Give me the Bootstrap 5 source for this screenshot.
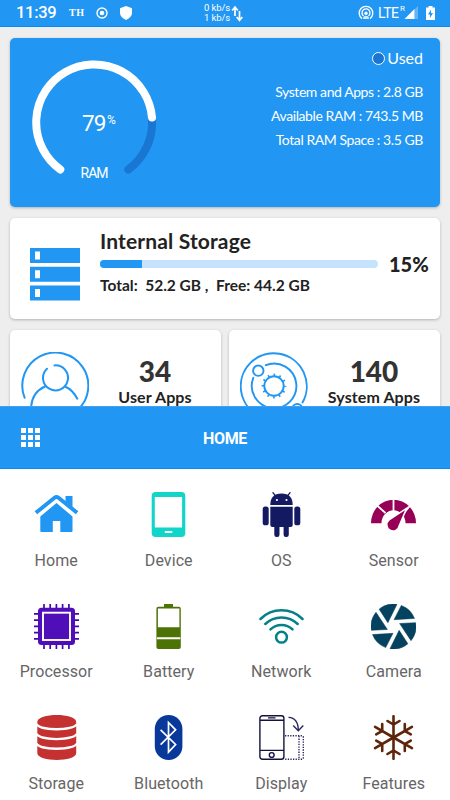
<!DOCTYPE html>
<html lang="en">
<head>
<meta charset="utf-8">
<meta name="viewport" content="width=device-width, initial-scale=1">
<title>Device Info</title>
<link href="https://cdn.jsdelivr.net/npm/bootstrap@5.3.0/dist/css/bootstrap.min.css" rel="stylesheet">
<style>
body{width:450px;height:800px;background:#eee;font-family:Roboto,"Liberation Sans",sans-serif}
svg{display:block;flex:none}
.lato{font-family:Lato,"Liberation Sans",sans-serif}
.blue{background:#2196f3}
.status{height:27px;padding:0 15px 0 16px;line-height:1;border-bottom:1px solid #0c8af0}
.clock{font-size:16.5px;letter-spacing:-.3px;width:53px;font-weight:500}
.th{font:700 10px/1 "Liberation Serif",serif;width:27px;letter-spacing:.6px}
.speed{font-size:9.5px;line-height:10.5px;width:27px;margin-left:64px;letter-spacing:-.1px}
.lte{font-size:14px;letter-spacing:-.5px;width:22px}
.roam{font-size:8px;width:4px;height:16px}
.overview{height:379px;padding:11px 10px 0}
.panel{border:0;border-radius:5px;box-shadow:0 1px 3px rgba(0,0,0,.25);color:#222}
.ram{height:169px;margin-bottom:11px;background:#2196f3;color:#fff}
.gauge{width:124px;margin:22px 0 0 22px}
.gauge text{fill:#fff}
.stats{padding:10px 17px 0 0;font-size:14px}
.stats .used{font-size:16px;line-height:20px;margin-bottom:12px}
.stats .line{line-height:24.2px;letter-spacing:-.42px}
.dot{width:13px;height:13px;border:1px solid #fff;background:#1976d2;margin-right:2px}
.store{height:101px;margin-bottom:11px;padding-left:20px}
.store .info{width:278px;margin:11px 0 0 20px}
.store h2{font-size:21px;line-height:24px;margin:0 0 7px;font-weight:700;letter-spacing:.15px}
.store .progress{height:8px;border-radius:4px;background:#c5e3fc}
.store .progress-bar{background:#2196f3}
.store .total{font-size:15.5px;line-height:18px;margin-top:8px;white-space:pre}
.pct{font-size:20px;margin:-9px 0 0 11px;font-weight:900}
.apps{height:120px;padding:22px 0 0 11px}
.apps .txt{padding-top:4px}
.num{font-size:28px;line-height:31px;font-weight:900;color:#333}
.cap{font-size:16px;line-height:20px;letter-spacing:.1px}
.sheet-head{height:63px;border-top:1px solid #42a0f2;border-bottom:1px solid #0c8af0}
.sheet-head .ttl{font-size:16px;font-weight:700;letter-spacing:-.3px;padding-top:2px}
.tiles{height:331px;padding-top:23px}
.tile{height:111.7px;color:#666;font-size:16px}
.tile .name{line-height:20px;margin-top:13.5px;letter-spacing:.08px}
</style>
<script src="https://cdn.jsdelivr.net/npm/bootstrap@5.3.0/dist/js/bootstrap.bundle.min.js"></script>
</head>
<body class="d-flex flex-column overflow-hidden">
<header class="status blue text-white d-flex align-items-center flex-shrink-0">
  <span class="clock">11:39</span><span class="th">TH</span>
  <svg width="12" height="12" viewBox="0 0 12 12"><circle cx="6" cy="6" r="5" fill="none" stroke="#fff" stroke-width="1.4"/><circle cx="6" cy="6" r="2.3" fill="#fff"/></svg>
  <svg class="ms-2" width="24" height="14" viewBox="0 0 24 14"><path d="M10 0l6 2.2v4.800q0 4-6 7q-6-3-6-7V2.200z" fill="#fff"/></svg>
  <span class="speed">0 kb/s<br>1 kb/s</span>
  <svg width="13" height="17" viewBox="0 0 13 17"><path d="M4 11V3M1.200 5.500L4 2l2.800 3.500M8.500 6v8M5.700 12l2.800 3.500l2.800-3.500" fill="none" stroke="#fff" stroke-width="1.700"/></svg>
  <svg class="ms-auto me-1" width="16" height="16" viewBox="0 0 16 16"><g fill="none" stroke="#fff" stroke-width="1.3"><path d="M4 13.600A6.800 6.800 0 1 1 12 13.600M5.500 11A4 4 0 1 1 10.500 11"/></g><circle cx="8" cy="8.300" r="1.700" fill="#fff"/><path d="M5 14q0-3.200 3-3.200t3 3.200z" fill="#fff" opacity=".8"/></svg>
  <span class="lte">LTE</span><span class="roam">R</span>
  <svg width="22" height="14" viewBox="0 0 22 14"><path d="M14 0v13H10.500V3.500z" fill="#fff" opacity=".3"/><path d="M10.500 3V13H.5z" fill="#fff"/></svg>
  <svg width="9" height="14" viewBox="0 0 9 14"><path d="M2.500 0h4v1.500H9V14H0V1.500h2.500z" fill="#fff"/><path d="M5 3.500L2 8.500h2v3.500l3-5H5z" fill="#2196f3"/></svg>
</header>

<main class="overview overflow-hidden flex-shrink-0">
  <section class="panel card ram d-flex flex-row">
    <svg class="gauge" height="126" viewBox="32 60 124 126">
      <g fill="none" stroke-width="8" stroke-linecap="round">
        <path d="M152 119A58 58 0 0 1 128.300 169.500" stroke="#1976d2"/>
        <path d="M60.300 169.500A58 58 0 1 1 152 117.500" stroke="#fff"/>
      </g>
      <text x="82" y="130.500" font-size="22.500" textLength="24.500">79</text><text x="107" y="124" font-size="12">%</text>
      <text x="94.500" y="177.500" font-size="14" text-anchor="middle" textLength="28">RAM</text>
    </svg>
    <div class="stats lato ms-auto text-end">
      <div class="used d-flex align-items-center justify-content-end"><span class="dot rounded-circle"></span>Used</div>
      <div class="line">System and Apps : 2.8 GB</div>
      <div class="line">Available RAM : 743.5 MB</div>
      <div class="line">Total RAM Space : 3.5 GB</div>
    </div>
  </section>

  <section class="panel card store lato d-flex flex-row">
    <svg class="mt-4" width="50" height="60" viewBox="0 0 50 60"><g transform="translate(0 6)"><path d="M0 0h50v15H0zM0 18.800h50v15H0zM0 37.600h50v15H0z" fill="#2196f3"/><path d="M5 3.500h5v8H5zM5 22.300h5v8H5zM5 41.100h5v8H5z" fill="#fff"/></g></svg>
    <div class="info">
      <h2>Internal Storage</h2>
      <div class="progress"><div class="progress-bar" style="width:15%"></div></div>
      <div class="total fw-bold">Total:  52.2 GB ,  Free: 44.2 GB</div>
    </div>
    <div class="pct align-self-center">15%</div>
  </section>

  <div class="d-flex gap-2 lato">
    <section class="panel card apps d-flex flex-row w-50">
      <svg width="68" height="68" viewBox="21 352 68 68"><g fill="none" stroke="#2196f3" stroke-width="2" stroke-linecap="round"><path d="M24.600 397.700A33 33 0 1 1 77 410.500"/><path d="M47 368.700A12.500 12.500 0 1 0 54.500 365.400M31 410C31 397 37 390 45 386.500M65 386.500Q73 390 77.300 398.700"/></g></svg>
      <div class="txt flex-fill text-center"><div class="num">34</div><div class="cap fw-bold">User Apps</div></div>
    </section>
    <section class="panel card apps d-flex flex-row w-50">
      <svg width="68" height="68" viewBox="240 352 68 68"><g fill="none" stroke="#2196f3" stroke-width="1.900" stroke-linecap="round"><path d="M302.500 402.500A33 33 0 1 0 290 415"/><path d="M265.800 365.200A22.300 22.300 0 1 1 253.300 377.800"/><circle cx="258.300" cy="370.700" r="5.200"/><circle cx="297.300" cy="409" r="5"/><circle cx="274" cy="386" r="9.700"/></g><circle cx="274" cy="386" r="11.200" fill="none" stroke="#2196f3" stroke-width="2.400" stroke-dasharray="1.600 4.264" stroke-dashoffset=".8"/></svg>
      <div class="txt flex-fill text-center"><div class="num">140</div><div class="cap fw-bold">System Apps</div></div>
    </section>
  </div>
</main>

<div class="sheet-head blue text-white d-flex align-items-center flex-shrink-0">
  <svg class="ms-3" width="24" height="19" viewBox="-5 0 24 19"><path d="M0 0h5v5H0zM7 0h5v5H7zM14 0h5v5h-5zM0 7h5v5H0zM7 7h5v5H7zM14 7h5v5h-5zM0 14h5v5H0zM7 14h5v5H7zM14 14h5v5h-5z" fill="#fff"/></svg>
  <div class="ttl flex-fill text-center me-4 pe-3">HOME</div>
</div>

<nav class="tiles row row-cols-4 g-0 bg-white flex-shrink-0 text-center">
  <div class="tile"><svg class="mx-auto" width="45" height="45"><g fill="#2196f3"><path d="M31.500 4h7v13l-7-6z"/><path d="M6.300 24.500L22.500 11L38.500 24.500V39q0 1-1 1H26.300V29h-7.500V40H7.300q-1 0-1-1z"/></g><path d="M1.900 20.800L20.500 5.700Q22.500 4.200 24.500 5.700L43.100 20.800" fill="none" stroke="#2196f3" stroke-width="3.900"/></svg><div class="name">Home</div></div>
  <div class="tile"><svg class="mx-auto" width="45" height="45"><rect x="5.700" width="33.600" height="45" rx="4" fill="#10d5c8"/><path d="M8.800 5h27.300v30.500H8.800zM18.800 39h7.500v2h-7.500z" fill="#fff"/></svg><div class="name">Device</div></div>
  <div class="tile"><svg class="mx-auto" width="45" height="45"><g fill="#131a62"><path d="M11.300 13Q11.300 1.500 22.500 1.500T33.700 13z"/><path d="M11.300 14.700h22.400V33q0 2-2 2H13.300q-2 0-2-2z"/><rect x="3.700" y="14.500" width="6" height="18.800" rx="2.600"/><rect x="35.300" y="14.500" width="6" height="18.800" rx="2.600"/><rect x="15.300" y="30" width="5.200" height="15" rx="2.300"/><rect x="24.600" y="30" width="5.200" height="15" rx="2.300"/></g><path d="M13.600.3l3.400 4M31.400.3l-3.400 4" stroke="#131a62" stroke-width="1.300"/><circle cx="17.900" cy="8" r="1.100" fill="#fff"/><circle cx="27.500" cy="8" r="1.100" fill="#fff"/></svg><div class="name">OS</div></div>
  <div class="tile"><svg class="mx-auto" width="45" height="45"><path d="M0 31.200A22.500 23.500 0 0 1 45 31.200H34.500A12 13 0 0 0 10.500 31.200z" fill="#970057"/><path d="M22.500 6v13M5.500 13l9 8M40 12.500L28 27" stroke="#fff" stroke-width="1.800"/><path d="M34 18.300L27.500 33.500A5.500 5.500 0 1 1 18.500 28.500z" fill="#970057" stroke="#fff" stroke-width="3" paint-order="stroke"/></svg><div class="name">Sensor</div></div>
  <div class="tile"><svg class="mx-auto" width="45" height="45"><path d="M10 0v45M16.200 0v45M22.400 0v45M28.600 0v45M34.900 0v45M0 9.900h45M0 16.200h45M0 22.400h45M0 28.600h45M0 34.800h45" stroke="#4208b0" stroke-width="1.700"/><rect x="4" y="3.700" width="37" height="37.300" rx="3.500" fill="#500eb8"/><rect x="9" y="8.700" width="27" height="27.300" fill="none" stroke="#fff" stroke-width="1.900"/></svg><div class="name">Processor</div></div>
  <div class="tile"><svg class="mx-auto" width="45" height="45"><path d="M18 0h9v2.800h5.800q2 0 2 2V43q0 2-2 2H12.400q-2 0-2-2V4.800q0-2 2-2H18z" fill="#4d7306"/><path d="M11.900 4.500h21.500v18.800H11.900zM10.900 33.300h23.400v2H10.900z" fill="#fff"/></svg><div class="name">Battery</div></div>
  <div class="tile"><svg class="mx-auto" width="45" height="45"><g fill="none" stroke="#04808a" stroke-width="2.500" stroke-linecap="round"><circle cx="22.500" cy="33.200" r="5.400"/><path d="M1.500 15A29.700 29.700 0 0 1 43.500 15M6.300 20A23.200 23.200 0 0 1 38.700 20M11.500 25.300A15.900 15.900 0 0 1 33.500 25.300"/></g></svg><div class="name">Network</div></div>
  <div class="tile"><svg class="mx-auto" width="45" height="45" viewBox="-22.500 -22.500 45 45"><defs><path id="blade" d="M7.800-21.100A22.500 22.500 0 0 1 21-8.100L.5-6.800z"/></defs><g fill="#05425f" stroke="#05425f" stroke-width=".5"><use href="#blade"/><use href="#blade" transform="rotate(60)"/><use href="#blade" transform="rotate(120)"/><use href="#blade" transform="rotate(180)"/><use href="#blade" transform="rotate(240)"/><use href="#blade" transform="rotate(300)"/></g></svg><div class="name">Camera</div></div>
  <div class="tile"><svg class="mx-auto" width="45" height="45"><path d="M3.300 7C3.300-2.300 42.200-2.300 42.200 7V38C42.200 47.300 3.300 47.300 3.300 38z" fill="#c53131"/><path d="M2.500 9C6 16 39 16 43 9M2.500 18.800C6 25.800 39 25.800 43 18.800M2.500 28.500C6 35.500 39 35.500 43 28.500" fill="none" stroke="#fff" stroke-width="2.300"/></svg><div class="name">Storage</div></div>
  <div class="tile"><svg class="mx-auto" width="45" height="45"><rect x="8.800" width="27.600" height="45" rx="13.800" fill="#08399a"/><path d="M14.600 14.800L29.600 29.500L22.500 37V7.500L29.600 14.800L14.600 29.700" fill="none" stroke="#fff" stroke-width="1.700"/></svg><div class="name">Bluetooth</div></div>
  <div class="tile"><svg class="mx-auto" width="45" height="45"><g fill="none" stroke="#14123f" stroke-width="1.400"><rect x=".9" y=".7" width="24" height="43.600" rx="2.500"/><path d="M1 5.200h24M1 35.400h24M9 2.900h7.500"/><circle cx="12.700" cy="40" r="2.400"/><path d="M29.500 2.400Q39.300 3 39.300 15.500M34.200 10.500l5.100 5.200l5-5.200" stroke="#29265e"/><path d="M26 20.700H43q1.300 0 1.300 1.300V43q0 1.300-1.300 1.300H25.500M40 21v23" stroke="#29265e" stroke-dasharray="1.300 1.300"/></g></svg><div class="name">Display</div></div>
  <div class="tile"><svg class="mx-auto" width="45" height="45" viewBox="-22.500 -22.500 45 45"><defs><path id="arm" d="M0 0V-21.300M-6-16.500L0-13L6-16.500"/></defs><g fill="none" stroke="#5d260b" stroke-width="2.600" stroke-linecap="round"><use href="#arm"/><use href="#arm" transform="rotate(60)"/><use href="#arm" transform="rotate(120)"/><use href="#arm" transform="rotate(180)"/><use href="#arm" transform="rotate(240)"/><use href="#arm" transform="rotate(300)"/></g></svg><div class="name">Features</div></div>
</nav>
</body>
</html>
